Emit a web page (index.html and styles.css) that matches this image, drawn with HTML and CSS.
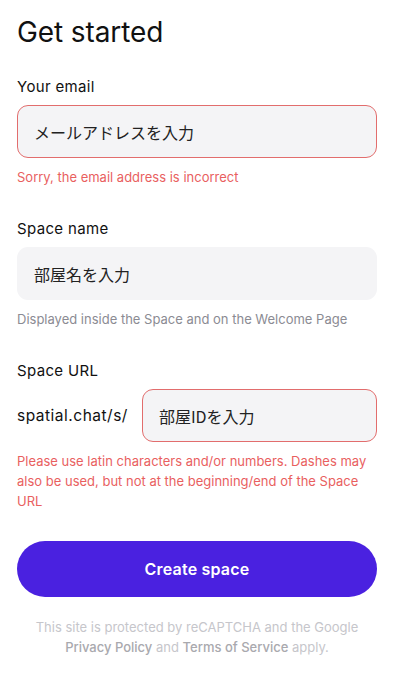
FILE: index.html
```html
<!DOCTYPE html>
<html lang="ja">
<head>
<meta charset="utf-8">
<link rel="stylesheet" href="styles.css">
</head>
<body>
<main class="page">
  <h1 class="title">Get started</h1>

  <section class="field">
    <label class="label">Your email</label>
    <div class="input input-error">メールアドレスを入力</div>
    <p class="msg msg-error">Sorry, the email address is incorrect</p>
  </section>

  <section class="field">
    <label class="label">Space name</label>
    <div class="input">部屋名を入力</div>
    <p class="msg msg-hint">Displayed inside the Space and on the Welcome Page</p>
  </section>

  <section class="field">
    <label class="label">Space URL</label>
    <div class="url-row">
      <span class="prefix">spatial.chat/s/</span>
      <div class="input input-error url-input">部屋IDを入力</div>
    </div>
    <p class="msg msg-error">Please use latin characters and/or numbers. Dashes may also be used, but not at the beginning/end of the Space URL</p>
  </section>

  <button class="btn">Create space</button>

  <p class="legal">This site is protected by reCAPTCHA and the Google <b>Privacy Policy</b> and <b>Terms of Service</b> apply.</p>
</main>
</body>
</html>
```
FILE: styles.css
```css
* { box-sizing: border-box; }
html, body { margin: 0; padding: 0; background: #fff; }
body {
  font-family: Inter, "Noto Sans CJK JP", sans-serif;
  color: #111;
}
.page {
  padding: 15px 25px 0 17px;
  display: flex;
  flex-direction: column;
}
.title {
  margin: 0;
  font-size: 28px;
  font-weight: 400;
  line-height: 34px;
  letter-spacing: -0.1px;
}
.field {
  display: flex;
  flex-direction: column;
}
.title + .field { margin-top: 28px; }
.field + .field { margin-top: 32px; }
.label {
  font-size: 15px;
  line-height: 20px;
  letter-spacing: 0.35px;
  margin-bottom: 8px;
}
.input {
  height: 53px;
  border-radius: 11px;
  background: #f4f4f6;
  border: 1px solid transparent;
  display: flex;
  align-items: center;
  padding: 0 16px;
  font-size: 16px;
  color: #222;
  font-family: "Noto Sans CJK JP", sans-serif;
}
.input-error { border-color: #e26d6d; }
.msg {
  margin: 9px 0 0;
  font-size: 13px;
  line-height: 20px;
}
.msg-error { color: #e95f5f; }
.msg-hint { color: #8b8b93; }
.url-row {
  display: flex;
  align-items: center;
  gap: 14px;
}
.prefix {
  font-size: 15.5px;
  letter-spacing: 0.5px;
  white-space: nowrap;
}
.url-input { flex: 1; }
.btn {
  margin-top: 30px;
  height: 56px;
  border: 0;
  border-radius: 28px;
  background: #4a21e0;
  color: #fff;
  font-family: Inter, sans-serif;
  font-size: 16px;
  font-weight: 600;
  letter-spacing: 0.2px;
}
.legal {
  margin: 20px 0 0;
  text-align: center;
  font-size: 13px;
  line-height: 20px;
  color: #c6c6cb;
}
.legal b { color: #a9a9ae; font-weight: 500; }
```
